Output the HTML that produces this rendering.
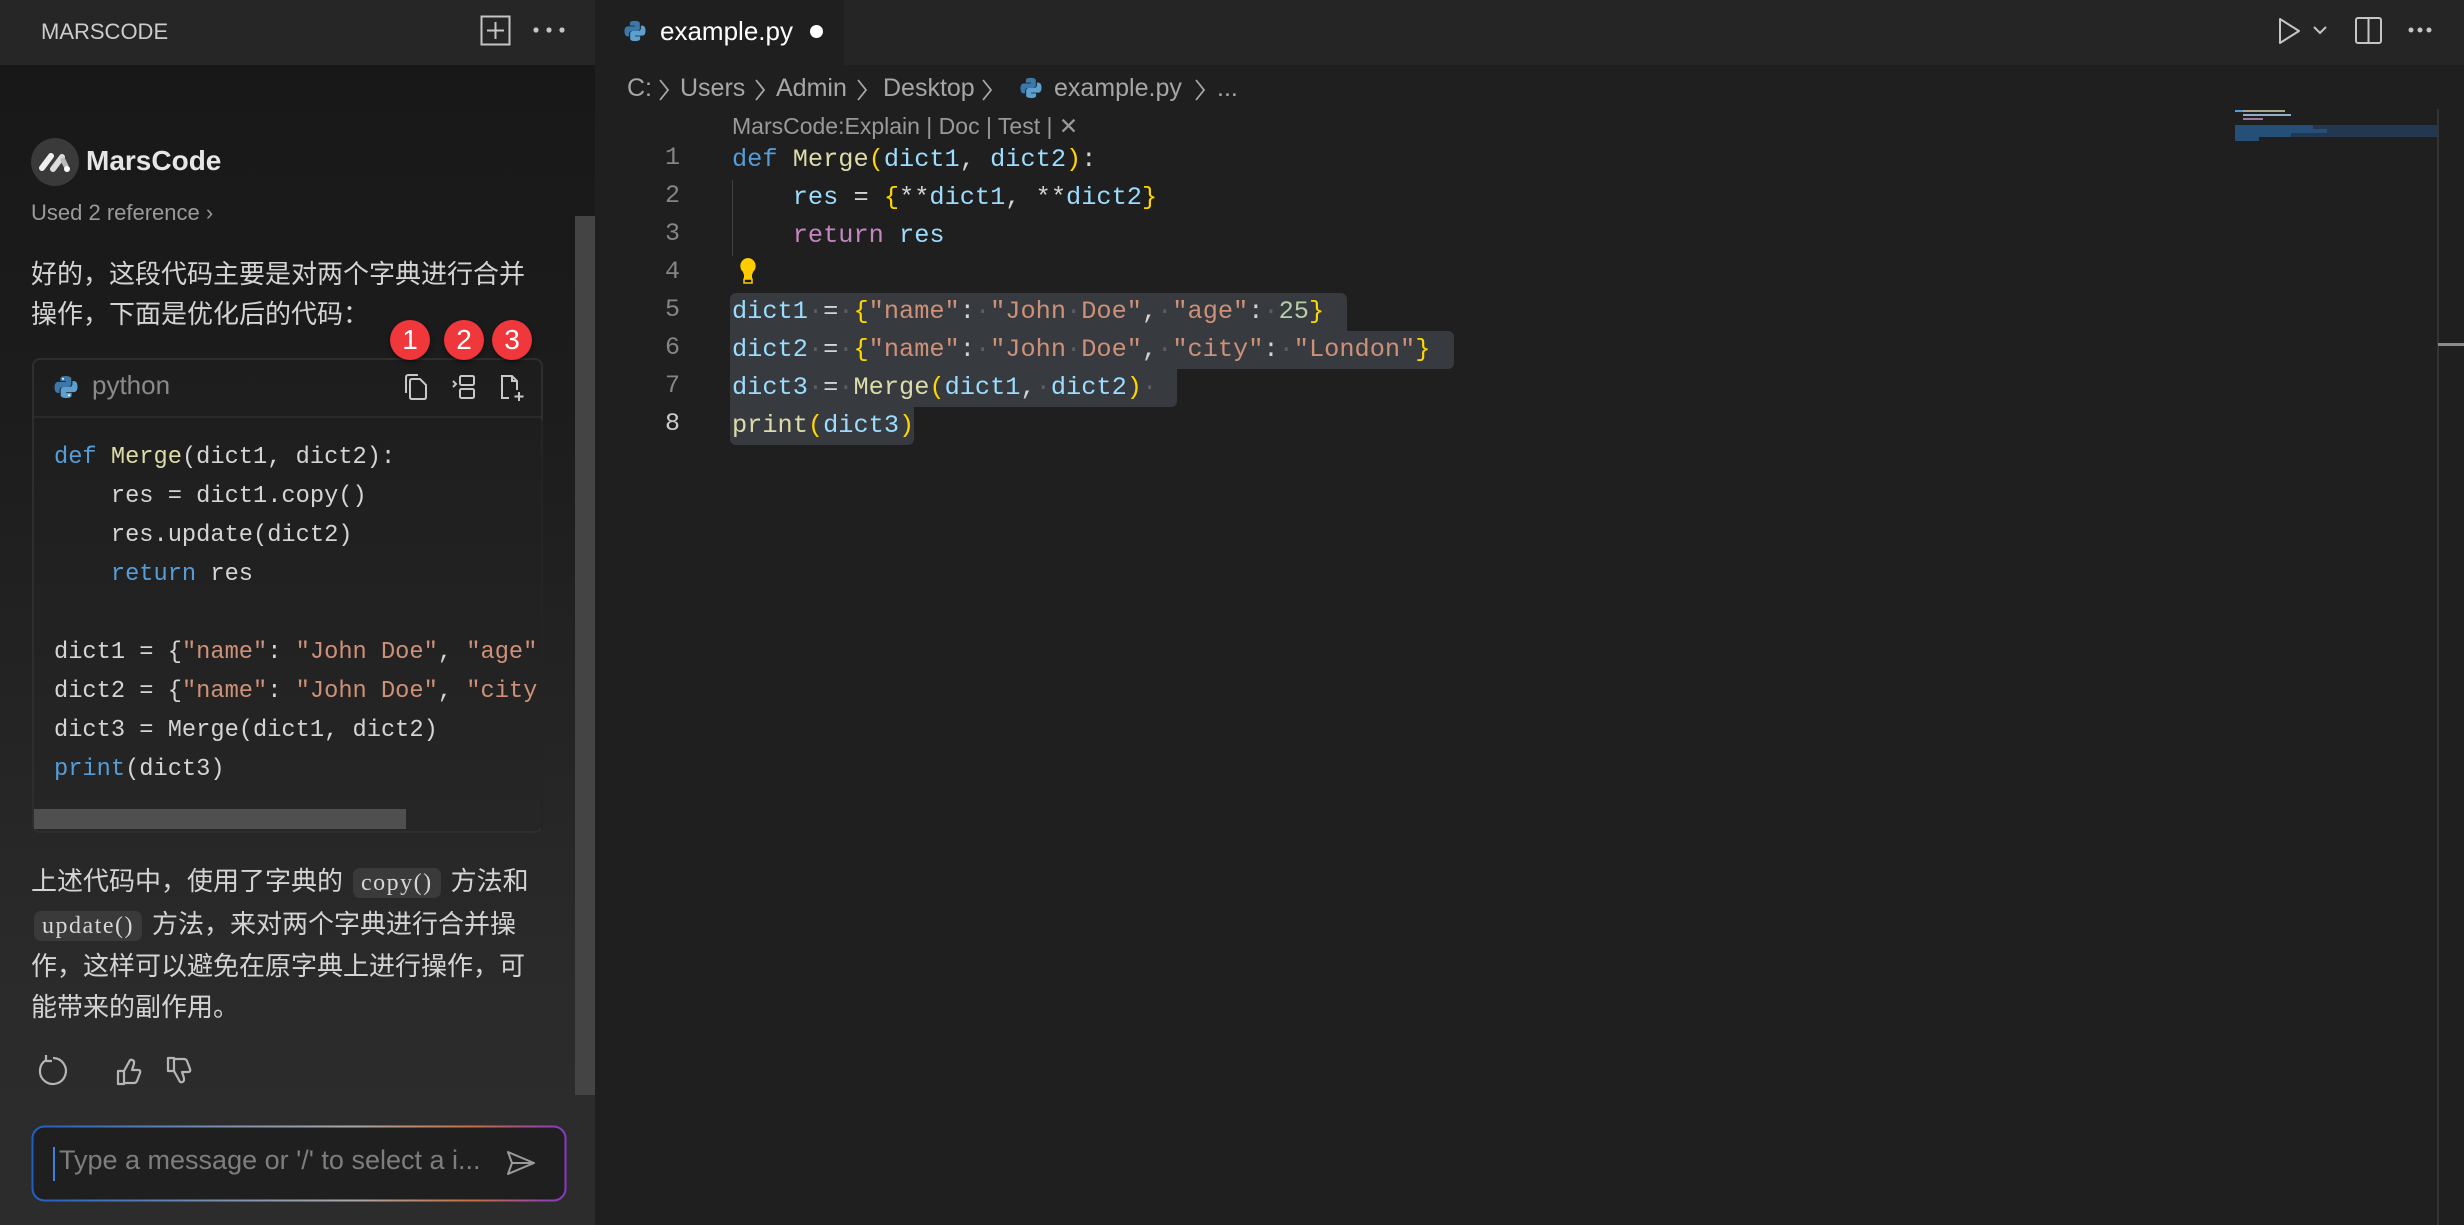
<!DOCTYPE html>
<html><head><meta charset="utf-8"><style>
*{margin:0;padding:0;box-sizing:border-box}
body{width:2464px;height:1225px;overflow:hidden;background:#1f1f1f;font-family:"Liberation Sans","Noto Sans CJK SC",sans-serif;position:relative}
.a{position:absolute;white-space:pre}
#side{position:absolute;left:0;top:0;width:595px;height:1225px;background:linear-gradient(#181818 65px,#1c1c1c 400px,#2b2b2b 1000px,#2c2c2c)}
#shead{position:absolute;left:0;top:0;width:595px;height:65px;background:#262626}
.mono{font-family:"Liberation Mono","DejaVu Sans Mono",monospace}
.cn{font-size:26px;color:#d4d4d4;font-family:"Liberation Sans","Noto Sans CJK SC",sans-serif}
.chip{background:#3a3a3a;border-radius:7px;font-family:"Liberation Serif","DejaVu Serif",serif;font-size:24px;letter-spacing:1.5px;padding:2px 8px;margin:0 10px;color:#d6d6d6}
.badge{position:absolute;width:40px;height:40px;border-radius:20px;background:#f0383c;color:#fff;font-size:28px;text-align:center;line-height:40px;box-shadow:0 2px 4px rgba(0,0,0,.5)}
.sc{font-size:23.7px;color:#d4d4d4;line-height:39px}
.ed{font-size:25.3px;line-height:38px;color:#d4d4d4}
.ln{position:absolute;width:40px;text-align:right;font-size:25px;color:#858585;font-family:"Liberation Mono",monospace}
.k{color:#569cd6}.f{color:#dcdcaa}.v{color:#9cdcfe}.b{color:#ffd700}.p{color:#c586c0}.s{color:#ce9178}.n{color:#b5cea8}
.d{color:#5a5d62}
.sel{position:absolute;background:#373a3f}
.bc{position:absolute;top:74px;font-size:25px;color:#a6a6a6}
</style></head><body>
<div id="side"></div>
<div id="shead"></div>
<div class="a" style="left:41px;top:19px;font-size:22px;color:#cccccc">MARSCODE</div>
<svg class="a" style="left:480px;top:15px" width="32" height="32" viewBox="0 0 32 32"><rect x="1.5" y="1.5" width="28" height="28" fill="none" stroke="#c5c5c5" stroke-width="2"/><path d="M15.5 7v17M7 15.5h17" stroke="#c5c5c5" stroke-width="2"/></svg>
<svg class="a" style="left:532px;top:24px" width="34" height="12"><circle cx="4" cy="6" r="2.6" fill="#c5c5c5"/><circle cx="17" cy="6" r="2.6" fill="#c5c5c5"/><circle cx="30" cy="6" r="2.6" fill="#c5c5c5"/></svg>
<div class="a" style="left:575px;top:216px;width:20px;height:879px;background:#444"></div>

<svg class="a" style="left:31px;top:138px" width="48" height="48" viewBox="0 0 48 48"><circle cx="24" cy="24" r="24" fill="#3a3a3a"/><path d="M11 30l9-12" stroke="#eee" stroke-width="6" stroke-linecap="round"/><path d="M22 31l9-12" stroke="#ddd" stroke-width="6" stroke-linecap="round"/><path d="M32 22l3 6" stroke="#bbb" stroke-width="5" stroke-linecap="round"/><circle cx="36" cy="31" r="3" fill="#fff"/></svg>
<div class="a" style="left:86px;top:145px;font-size:28px;font-weight:bold;color:#e6e6e6">MarsCode</div>
<div class="a" style="left:31px;top:200px;font-size:22px;color:#9a9a9a">Used 2 reference ›</div>
<div class="a cn" style="left:31px;top:254px;line-height:40px">好的，这段代码主要是对两个字典进行合并<br>操作，下面是优化后的代码：</div>

<div class="a" style="left:32px;top:358px;width:511px;height:475px;border:2px solid #2e2e2e;border-radius:8px;background:linear-gradient(#1d1d1d,#262626)"></div>
<div class="a" style="left:34px;top:416px;width:507px;height:2px;background:#2a2a2a"></div>
<svg class="a" style="left:54px;top:375px" width="24" height="24" viewBox="0 0 24 24"><path d="M11.8 1C6 1 6.4 3.5 6.4 3.5v2.6h5.5v.8H4.2S.5 6.5.5 12.3s3.2 5.6 3.2 5.6h1.9v-2.7s-.1-3.2 3.2-3.2h5.4s3.1.1 3.1-3V3.9S17.8 1 11.8 1z" fill="#3b77a8"/><path d="M12.2 23c5.8 0 5.4-2.5 5.4-2.5v-2.6h-5.5v-.8h7.7s3.7.4 3.7-5.4-3.2-5.6-3.2-5.6h-1.9v2.7s.1 3.2-3.2 3.2H9.8s-3.1-.1-3.1 3v5.1S6.2 23 12.2 23z" fill="#5c9fd1"/><circle cx="9" cy="3.8" r="1" fill="#fff"/><circle cx="15" cy="20.2" r="1" fill="#fff"/></svg>
<div class="a" style="left:92px;top:370px;font-size:26px;color:#8b8b8b">python</div>
<svg class="a" style="left:403px;top:373px" width="125" height="28" viewBox="0 0 125 28" fill="none" stroke="#c8c8c8" stroke-width="2"><path d="M3 20V4.5Q3 2 5.5 2H15"/><path d="M7 8Q7 6 9 6h8l6 6v12q0 2-2 2H9q-2 0-2-2z"/><path d="M50 8l3 3-3 3"/><rect x="57" y="3" width="14" height="9" rx="1.5"/><rect x="57" y="16" width="14" height="9" rx="1.5"/><path d="M106 25H99V3h10l5 5v9"/><path d="M109 3v5h5"/><path d="M116 19v9M111.5 23.5h9"/></svg>
<div class="badge" style="left:390px;top:320px">1</div>
<div class="badge" style="left:444px;top:320px">2</div>
<div class="badge" style="left:492px;top:320px">3</div>

<div class="a mono sc" style="left:54px;top:438px"><span class="k">def</span> <span class="f">Merge</span>(dict1, dict2):
    res = dict1.copy()
    res.update(dict2)
    <span class="k">return</span> res

dict1 = {<span class="s">"name"</span>: <span class="s">"John Doe"</span>, <span class="s">"age"</span>
dict2 = {<span class="s">"name"</span>: <span class="s">"John Doe"</span>, <span class="s">"city</span>
dict3 = Merge(dict1, dict2)
<span class="k">print</span>(dict3)</div>
<div class="a" style="left:541px;top:420px;width:2px;height:410px;background:#242424"></div>
<div class="a" style="left:34px;top:809px;width:372px;height:20px;background:#4f4f4f"></div>

<div class="a cn" style="left:31px;top:861px;line-height:40.5px">上述代码中，使用了字典的<span class="chip">copy()</span>方法和<br><span class="chip" style="margin-left:3px">update()</span>方法，来对两个字典进行合并操<br>作，这样可以避免在原字典上进行操作，可<br>能带来的副作用。</div>

<svg class="a" style="left:38px;top:1054px" width="162" height="34" viewBox="0 0 162 34" fill="none" stroke="#b5b5b5" stroke-width="2.2" stroke-linejoin="round"><path d="M8 6A13 13 0 1 0 15 4"/><path d="M8 1v6h6"/><path d="M80 30V17h6v13zM86 17l5-9q1-3 3.5-2t1 5.5l-1.5 4.5h6q3 0 2 3l-3 8q-1 2-3 2H86"/><path d="M130 4v13h6V4zM136 17l5 9q1 3 3.5 2t1-5.5l-1.5-4.5h6q3 0 2-3l-3-8q-1-2-3-2H136"/></svg>

<svg class="a" style="left:31px;top:1125px" width="536" height="77"><defs><linearGradient id="g" x1="0" y1="0" x2="1" y2="0"><stop offset="0" stop-color="#1f5fc4"/><stop offset=".35" stop-color="#7b8fae"/><stop offset=".6" stop-color="#aaa"/><stop offset=".82" stop-color="#c9703f"/><stop offset="1" stop-color="#8a36c9"/></linearGradient></defs><rect x="1.5" y="1.5" width="533" height="74" rx="12" fill="#1f1f1f" stroke="url(#g)" stroke-width="2"/></svg>
<div class="a" style="left:53px;top:1147px;width:2px;height:34px;background:#3f7fe0"></div>
<div class="a" style="left:59px;top:1145px;font-size:27px;color:#7e7e7e">Type a message or '/' to select a i...</div>
<svg class="a" style="left:506px;top:1150px" width="30" height="26" viewBox="0 0 30 26" fill="none" stroke="#9a9a9a" stroke-width="2" stroke-linejoin="round"><path d="M2 2l26 11L2 24l4-11z"/><path d="M6 13h22"/></svg>

<!-- editor -->
<div class="a" style="left:595px;top:0;width:1869px;height:65px;background:#252525"></div>
<div class="a" style="left:595px;top:0;width:249px;height:65px;background:#1f1f1f"></div>
<svg class="a" style="left:624px;top:20px" width="22" height="22" viewBox="0 0 24 24"><path d="M11.8 1C6 1 6.4 3.5 6.4 3.5v2.6h5.5v.8H4.2S.5 6.5.5 12.3s3.2 5.6 3.2 5.6h1.9v-2.7s-.1-3.2 3.2-3.2h5.4s3.1.1 3.1-3V3.9S17.8 1 11.8 1z" fill="#3b77a8"/><path d="M12.2 23c5.8 0 5.4-2.5 5.4-2.5v-2.6h-5.5v-.8h7.7s3.7.4 3.7-5.4-3.2-5.6-3.2-5.6h-1.9v2.7s.1 3.2-3.2 3.2H9.8s-3.1-.1-3.1 3v5.1S6.2 23 12.2 23z" fill="#5c9fd1"/></svg>
<div class="a" style="left:660px;top:16px;font-size:26px;color:#ffffff">example.py</div>
<div class="a" style="left:810px;top:25px;width:13px;height:13px;border-radius:7px;background:#fff"></div>
<svg class="a" style="left:2277px;top:17px" width="160" height="28" fill="none" stroke="#c5c5c5" stroke-width="2"><path d="M3 2l19 12L3 26z" stroke-linejoin="round"/><path d="M37 10l6 6 6-6"/><rect x="79" y="1" width="25" height="25" rx="2"/><path d="M91.5 1v25"/><circle cx="134" cy="13" r="2.5" fill="#c5c5c5" stroke="none"/><circle cx="143" cy="13" r="2.5" fill="#c5c5c5" stroke="none"/><circle cx="152" cy="13" r="2.5" fill="#c5c5c5" stroke="none"/></svg>

<div class="bc" style="left:627px">C:</div>
<div class="bc" style="left:680px">Users</div>
<div class="bc" style="left:776px">Admin</div>
<div class="bc" style="left:883px">Desktop</div>
<div class="bc" style="left:1054px">example.py</div>
<div class="bc" style="left:1217px">...</div>
<svg class="a" style="left:655px;top:75px" width="560" height="30" fill="none" stroke="#a6a6a6" stroke-width="1.8"><path d="M5 5l8 10-8 10"/><path d="M101 5l8 10-8 10"/><path d="M203 5l8 10-8 10"/><path d="M328 5l8 10-8 10"/><path d="M541 5l8 10-8 10"/></svg>
<svg class="a" style="left:1020px;top:77px" width="22" height="22" viewBox="0 0 24 24"><path d="M11.8 1C6 1 6.4 3.5 6.4 3.5v2.6h5.5v.8H4.2S.5 6.5.5 12.3s3.2 5.6 3.2 5.6h1.9v-2.7s-.1-3.2 3.2-3.2h5.4s3.1.1 3.1-3V3.9S17.8 1 11.8 1z" fill="#3b77a8"/><path d="M12.2 23c5.8 0 5.4-2.5 5.4-2.5v-2.6h-5.5v-.8h7.7s3.7.4 3.7-5.4-3.2-5.6-3.2-5.6h-1.9v2.7s.1 3.2-3.2 3.2H9.8s-3.1-.1-3.1 3v5.1S6.2 23 12.2 23z" fill="#5c9fd1"/></svg>
<div class="a" style="left:732px;top:113px;font-size:23px;color:#999">MarsCode:Explain | Doc | Test | ✕</div>

<div class="sel" style="left:730px;top:293px;width:617px;height:38px;border-radius:6px 6px 0 0"></div>
<div class="sel" style="left:730px;top:331px;width:724px;height:38px;border-radius:0 6px 6px 0"></div>
<div class="sel" style="left:730px;top:369px;width:447px;height:38px;border-radius:0 0 6px 0"></div>
<div class="sel" style="left:730px;top:407px;width:184px;height:38px;border-radius:0 0 6px 6px"></div>
<div class="a" style="left:732px;top:180px;width:1px;height:76px;background:#404040"></div>

<div class="ln" style="left:640px;top:143px">1</div>
<div class="ln" style="left:640px;top:181px">2</div>
<div class="ln" style="left:640px;top:219px">3</div>
<div class="ln" style="left:640px;top:257px">4</div>
<div class="ln" style="left:640px;top:295px">5</div>
<div class="ln" style="left:640px;top:333px">6</div>
<div class="ln" style="left:640px;top:371px">7</div>
<div class="ln" style="left:640px;top:409px;color:#ccc">8</div>
<svg class="a" style="left:738px;top:257px" width="20" height="28" viewBox="0 0 20 28"><path d="M10 1a8 8 0 0 0-5 14l1 3v4h8v-4l1-3a8 8 0 0 0-5-14z" fill="#ffcc00"/><rect x="6" y="22" width="8" height="4" fill="none" stroke="#ffcc00" stroke-width="1.5"/></svg>

<div class="a mono ed" style="left:732px;top:141px"><span class="k">def</span> <span class="f">Merge</span><span class="b">(</span><span class="v">dict1</span>, <span class="v">dict2</span><span class="b">)</span>:
    <span class="v">res</span> = <span class="b">{</span>**<span class="v">dict1</span>, **<span class="v">dict2</span><span class="b">}</span>
    <span class="p">return</span> <span class="v">res</span>

<span class="v">dict1</span><span class="d">·</span>=<span class="d">·</span><span class="b">{</span><span class="s">"name"</span>:<span class="d">·</span><span class="s">"John<span class="d">·</span>Doe"</span>,<span class="d">·</span><span class="s">"age"</span>:<span class="d">·</span><span class="n">25</span><span class="b">}</span>
<span class="v">dict2</span><span class="d">·</span>=<span class="d">·</span><span class="b">{</span><span class="s">"name"</span>:<span class="d">·</span><span class="s">"John<span class="d">·</span>Doe"</span>,<span class="d">·</span><span class="s">"city"</span>:<span class="d">·</span><span class="s">"London"</span><span class="b">}</span>
<span class="v">dict3</span><span class="d">·</span>=<span class="d">·</span><span class="f">Merge</span><span class="b">(</span><span class="v">dict1</span>,<span class="d">·</span><span class="v">dict2</span><span class="b">)</span><span class="d">·</span>
<span class="f">print</span><span class="b">(</span><span class="v">dict3</span><span class="b">)</span></div>

<!-- minimap -->
<div class="a" style="left:2235px;top:110px;width:8px;height:2px;background:#569cd6"></div>
<div class="a" style="left:2243px;top:110px;width:42px;height:2px;background:#a8a890"></div>
<div class="a" style="left:2243px;top:114px;width:48px;height:2px;background:#8fb0c8"></div>
<div class="a" style="left:2243px;top:118px;width:20px;height:2px;background:#a07aa0"></div>
<div class="a" style="left:2235px;top:125px;width:202px;height:12px;background:#243750"></div>
<div class="a" style="left:2235px;top:125px;width:78px;height:4px;background:#264f78"></div>
<div class="a" style="left:2235px;top:129px;width:92px;height:4px;background:#264f78"></div>
<div class="a" style="left:2235px;top:133px;width:56px;height:4px;background:#264f78"></div>
<div class="a" style="left:2235px;top:137px;width:24px;height:4px;background:#264f78"></div>
<div class="a" style="left:2437px;top:109px;width:2px;height:1116px;background:#333"></div>
<div class="a" style="left:2438px;top:343px;width:26px;height:3px;background:#8a8a8a"></div>
</body></html>
